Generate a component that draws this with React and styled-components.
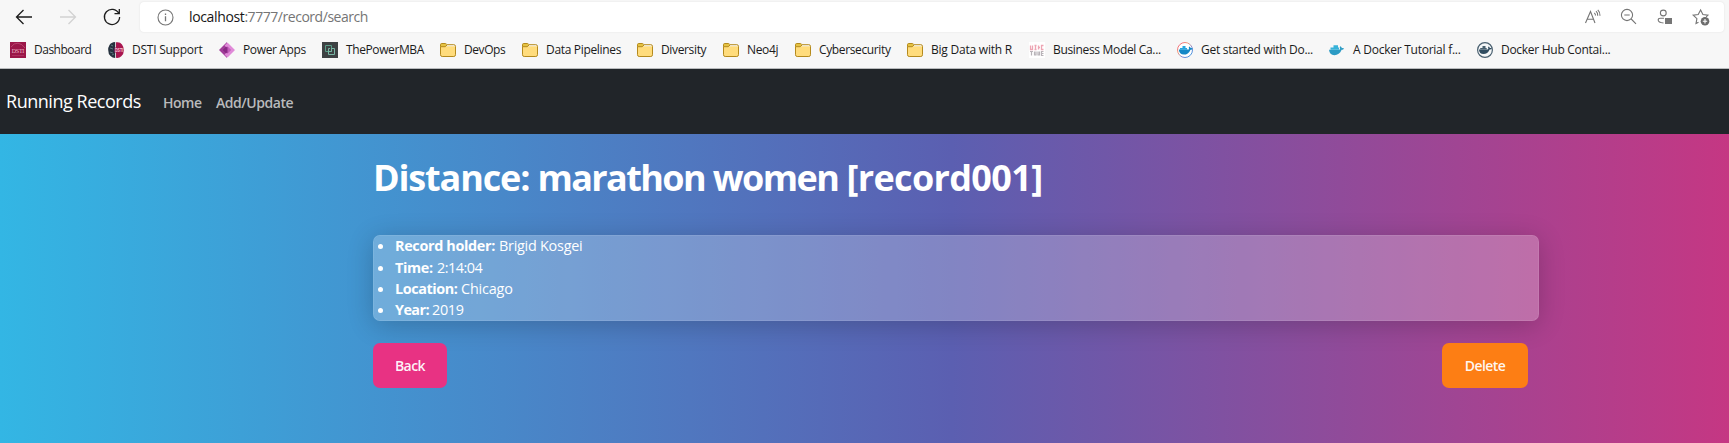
import React from "react";
import styled, { createGlobalStyle } from "styled-components";

const GlobalStyle = createGlobalStyle`
  * { box-sizing: border-box; }
  html, body { margin: 0; height: 100%; }
  body {
    font-family: "Open Sans", "Noto Sans", sans-serif;
    font-size: 14.4px;
    line-height: 1.5;
    color: #fff;
    overflow: hidden;
  }
`;

const Window = styled.div`
  display: flex;
  flex-direction: column;
  height: 100vh;
`;

const Chrome = styled.header`
  flex: none;
  height: 69px;
  padding-top: 2px;
  background: #f7f7f7;
  border-bottom: 1px solid #b9bbbd;
`;

const Toolbar = styled.div`
  display: flex;
  align-items: center;
  height: 30px;
  padding: 0 5px 0 15px;
`;

const NavButtons = styled.div`
  display: flex;
  gap: 26px;
  width: 125px;
`;

const AddressBar = styled.div`
  flex: 1;
  display: flex;
  align-items: center;
  height: 30px;
  padding: 0 14px 0 17px;
  border-radius: 4px;
  background: #fff;
  box-shadow: 0 0 2px rgba(0, 0, 0, 0.1);
`;

const Url = styled.div`
  flex: 1;
  margin-left: 15px;
  font-size: 14px;
  line-height: 20px;
  letter-spacing: -0.46px;
  color: #757575;
`;

const Host = styled.span`
  letter-spacing: -0.36px;
  color: #161616;
`;

const AddressActions = styled.div`
  display: flex;
  gap: 18px;
`;

const Bookmarks = styled.nav`
  display: flex;
  align-items: center;
  height: 36px;
  padding-left: 10px;
  gap: 16px;
`;

const Bookmark = styled.div`
  display: flex;
  align-items: center;
  gap: 8px;
`;

const BookmarkLabel = styled.span`
  width: ${(p) => p.$width}px;
  font-size: 12px;
  line-height: 16px;
  letter-spacing: ${(p) => p.$track}px;
  white-space: nowrap;
  color: #1b1b1b;
`;

const Icon = styled.svg`
  display: block;
  flex: none;
  width: ${(p) => p.$size || 16}px;
  height: ${(p) => p.$size || 16}px;
  overflow: visible;
`;

const Page = styled.div`
  flex: 1;
  background: linear-gradient(to right, #33b6e4 0%, #5b5fb1 55%, #c53783 100%);
`;

const Navbar = styled.nav`
  display: flex;
  align-items: center;
  height: 65px;
  padding-left: 6px;
  background: #212529;
`;

const Brand = styled.a`
  width: 157px;
  font-size: 18px;
  letter-spacing: -0.47px;
  color: #fff;
`;

const NavLink = styled.a`
  width: ${(p) => p.$width}px;
  padding-top: 1px;
  font-weight: 600;
  font-size: 14px;
  letter-spacing: ${(p) => p.$track}px;
  color: #b9babc;
`;

const Container = styled.main`
  width: 1166px;
  margin-left: 373px;
`;

const Title = styled.h1`
  margin: 0;
  padding-top: 21px;
  height: 101px;
  font-size: 36px;
  font-weight: 700;
  line-height: 46px;
  letter-spacing: -1.15px;
  white-space: nowrap;
`;

const Distance = styled.span`
  letter-spacing: -1.6px;
`;

const RecordId = styled.span`
  letter-spacing: -0.65px;
`;

const Card = styled.section`
  height: 86px;
  border: 1px solid rgba(255, 255, 255, 0.3);
  border-radius: 7px;
  background: rgba(255, 255, 255, 0.24);
  background-clip: padding-box;
  box-shadow: 0 4px 27px rgba(0, 0, 0, 0.2);
`;

const Facts = styled.ul`
  margin: -1px 0 0;
  padding: 0;
  list-style: none;
`;

const Fact = styled.li`
  display: flex;
  align-items: center;
  gap: 4px;
  height: 21.4px;
  padding-left: 4px;
  line-height: 21px;
  white-space: nowrap;

  &::before {
    content: "";
    width: 5px;
    height: 5px;
    margin: 2px 8px 0 0;
    border-radius: 50%;
    background: #fff;
  }
`;

const FactName = styled.strong`
  width: ${(p) => p.$width}px;
  font-weight: 700;
  letter-spacing: ${(p) => p.$track}px;
`;

const FactValue = styled.span`
  letter-spacing: ${(p) => p.$track}px;
`;

const Actions = styled.div`
  display: flex;
  justify-content: space-between;
  padding: 22px 11px 0 0;
`;

const Button = styled.button`
  width: ${(p) => p.$width}px;
  height: 45px;
  padding: 0;
  border: 0;
  border-radius: 7px;
  background: ${(p) => p.$color};
  font: 600 14px/21px "Open Sans", "Noto Sans", sans-serif;
  letter-spacing: -0.55px;
  color: rgba(255, 255, 255, 0.94);
`;

const FolderIcon = () => (
  <Icon viewBox="0 0 16 16">
    <path d="M.5 4.2h15v8.6q0 1.7-1.7 1.7H2.2Q.5 14.500.5 12.800z" fill="#ffdc7c" />
    <path d="M.5 4V2.700Q.5 1.500 1.700 1.500H5.500L7.200 3 5.700 4.700H.5z" fill="#e5c343" />
    <path
      d="M.5 4.700V2.700Q.5 1.500 1.700 1.500H5.300Q6 1.500 6.500 2L7.200 2.700H13.800Q15.500 2.700 15.500 4.300V12.700Q15.500 14.500 13.800 14.500H2.200Q.5 14.500.5 12.700ZM.5 4.700H5.200L7.200 2.900"
      fill="none"
      stroke="#b58a1c"
    />
  </Icon>
);

const DashboardIcon = () => (
  <Icon viewBox="0 0 16 16">
    <path d="M0 0h16v16H0z" fill="#9b1748" />
    <path d="M1 5Q4 .8 8 1.200T15 6" fill="none" stroke="#c4567f" strokeWidth=".7" />
    <text x="1.800" y="10.500" textLength="12.500" fontFamily="Liberation Serif" fontSize="6" fill="#efb9cb">DSTI</text>
    <path d="M2 13.500h12" stroke="#bd4874" strokeWidth=".5" />
  </Icon>
);

const SupportIcon = () => (
  <Icon viewBox="0 0 16 16">
    <path d="M7.200 0Q3 .3 1.500 3 0 5.500.2 8q0 4 2.300 6 2 2 4.700 2z" fill="#26323f" />
    <path d="M3 3l2 1M2 6l3 1M2 10l3 1M4 13l2-1" stroke="#5d7880" />
    <path d="M8 .3Q12-.5 14 2.500 16 5 15.800 8.500q0 4-2.500 5.800-2 2-5.300 1.500z" fill="#a9164f" />
    <path d="M6.500 5.500h3v5h-3z" fill="#a9164f" />
    <text x="6.900" y="10.200" textLength="8.200" fontFamily="Liberation Sans" fontWeight="700" fontSize="5.500" lengthAdjust="spacingAndGlyphs" fill="#f4cede">DSTI</text>
  </Icon>
);

const PowerAppsIcon = () => (
  <Icon viewBox="0 0 16 16">
    <path d="M8 0L0 8l8 8z" fill="#a13d99" />
    <path d="M8 4L4 8l4 4z" fill="#7d2378" />
    <path d="M8.500.5L16 8l-7.500 7.500L5.500 12.500 10 8 5.500 3.500z" fill="#e08ad8" />
    <path d="M8 4.500L11.500 8 8 11.500 4.500 8z" fill="#8b2a86" />
    <path d="M8.500 4.500L12 8l-3.500 3.500z" fill="#c35fbc" />
  </Icon>
);

const PowerMbaIcon = () => (
  <Icon viewBox="0 0 16 16">
    <path d="M0 0h16v16H0z" fill="#3e4244" />
    <path d="M3.500 3.500h6v6h-6z" fill="none" stroke="#5b9c88" />
    <path d="M9.500 6.500h3v6h-6v-6h1.500M6.500 9.500h3v-3" fill="none" stroke="#79b7a4" />
  </Icon>
);

const CanvasIcon = () => (
  <Icon viewBox="0 0 16 16">
    <path d="M0 0h16v16H0z" fill="#fff" />
    <path d="M1.500 3.500v4h2v-4M5.500 3.500h2M6.500 3.500v4M5.500 7.500h2M9.500 3.500v4M9.500 5.500h1.500M14.500 3.500h-2v4h2" fill="none" stroke="#eda5b3" strokeWidth="1.300" />
    <path d="M1 9.500h3M2.500 9.500v4M5.500 9.500v3.500h1.500v-3.500M9 9.500v3.500h1.500v-3.500M14.500 9.500h-2v4h2M12.500 11.500h2" fill="none" stroke="#b8b3b8" strokeWidth="1.200" />
  </Icon>
);

const whale = "M0 7h9.200c.5 0 .9-.2 1.200-.7-.6-.8-.5-1.800.2-2.500.9.500 1.200 1.100 1.200 1.700.8-.2 1.600 0 2.200.4-.5.9-1.300 1.200-2.300 1.200C10.300 10.600 8 12 5 12 2 12 .3 10.300 0 7z";

const DockerRingIcon = () => (
  <Icon viewBox="0 0 16 16">
    <defs>
      <linearGradient id="ring" x1="0" y1="0" x2="1" y2="1">
        <stop offset="0" stopColor="#ef4f7c" />
        <stop offset=".35" stopColor="#f29a77" />
        <stop offset=".65" stopColor="#7a87d8" />
        <stop offset="1" stopColor="#2b9ee0" />
      </linearGradient>
    </defs>
    <circle cx="8" cy="8" r="7.500" fill="#fff" stroke="url(#ring)" />
    <path d={whale} transform="translate(1.800 .6)" fill="#1488c6" />
    <path d="M3 6h7v1.800H3zM5.500 4h3v2.200h-3z" fill="#2aa5df" />
  </Icon>
);

const WhaleIcon = () => (
  <Icon viewBox="0 0 16 16">
    <path d={whale} transform="translate(0 .2) scale(1.080)" fill="#2c9bc4" />
    <path d="M1.500 5.500h8.500v2.200h-8.500zM4.500 3.200H9v2.500H4.500z" fill="#37b2d9" />
  </Icon>
);

const DockerHubIcon = () => (
  <Icon viewBox="0 0 16 16">
    <circle cx="8" cy="8" r="7.400" fill="#f5f7f8" stroke="#4a6070" strokeWidth="1.200" />
    <path d={whale} transform="translate(1.900 1) scale(.92)" fill="#314d61" />
    <path d="M3.200 5.900h6.500v1.700H3.200zM5.500 4h3v2h-3z" fill="#48606f" />
  </Icon>
);

const BackIcon = () => (
  <Icon $size={18} viewBox="0 0 18 18" fill="none" stroke="#1d1d1d" strokeWidth="1.300">
    <path d="M17 9H1.500M8.500 2L1.500 9l7 7" />
  </Icon>
);

const ForwardIcon = () => (
  <Icon $size={18} viewBox="0 0 18 18" fill="none" stroke="#d2d2d2" strokeWidth="1.300">
    <path d="M1 9h15.500M9.500 2l7 7-7 7" />
  </Icon>
);

const ReloadIcon = () => (
  <Icon $size={18} viewBox="0 0 18 18" fill="none" stroke="#1d1d1d" strokeWidth="1.300">
    <path d="M15.800 5.500A7.600 7.600 0 1 0 16.600 9M16.300 1v4.700h-4.800" />
  </Icon>
);

const InfoIcon = () => (
  <Icon $size={17} viewBox="0 0 17 17" fill="none" stroke="#757575" strokeWidth="1.100">
    <circle cx="8.500" cy="8.500" r="7.500" />
    <path d="M8.500 7.300v5M8.500 4.500v1.400" strokeWidth="1.300" />
  </Icon>
);

const ReadAloudIcon = () => (
  <Icon $size={18} viewBox="0 0 18 18" fill="none" stroke="#757575" strokeWidth="1.100">
    <path d="M1.500 15L6.500 3.500 11 15M3.200 11.200h6.200M10.300 4.800q1.300 1.200 1.200 2.700M12 3.200q2 1.800 1.700 4.600M13.800 1.800q2.500 2.400 2.200 6" />
  </Icon>
);

const ZoomOutIcon = () => (
  <Icon $size={18} viewBox="0 0 18 18" fill="none" stroke="#757575" strokeWidth="1.100">
    <circle cx="7" cy="7" r="5.600" />
    <path d="M11.200 11l4.800 4.800M4.300 7h5.400" />
  </Icon>
);

const ProfileIcon = () => (
  <Icon $size={18} viewBox="0 0 18 18" fill="none" stroke="#757575" strokeWidth="1.100">
    <circle cx="7.300" cy="5" r="2.900" />
    <path d="M8 10.300H4.300Q2.200 10.300 2.200 12q0 2.500 5.300 3" />
    <path d="M9 10h7v6H9z" fill="#757575" stroke="none" />
  </Icon>
);

const FavoriteIcon = () => (
  <Icon $size={18} viewBox="0 0 18 18" fill="none" stroke="#757575" strokeWidth="1.100">
    <path d="M6.500 14.300l-2.500 1.300.9-5L1.200 7.200l5-.7L8.600 2l2.300 4.500 5 .7-1.700 1.600" />
    <circle cx="13" cy="13.300" r="4.300" fill="#6c6c6c" stroke="none" />
    <path d="M13 11.100v4.400M10.800 13.300h4.400" stroke="#fff" />
  </Icon>
);

const bookmarks = [
  { label: "Dashboard", icon: DashboardIcon, width: 58, track: -0.5 },
  { label: "DSTI Support", icon: SupportIcon, width: 71, track: -0.24 },
  { label: "Power Apps", icon: PowerAppsIcon, width: 63, track: -0.37 },
  { label: "ThePowerMBA", icon: PowerMbaIcon, width: 78, track: -0.4 },
  { label: "DevOps", icon: FolderIcon, width: 42, track: -0.42 },
  { label: "Data Pipelines", icon: FolderIcon, width: 75, track: -0.33 },
  { label: "Diversity", icon: FolderIcon, width: 46, track: -0.35 },
  { label: "Neo4j", icon: FolderIcon, width: 32, track: -0.35 },
  { label: "Cybersecurity", icon: FolderIcon, width: 72, track: -0.37 },
  { label: "Big Data with R", icon: FolderIcon, width: 82, track: -0.22 },
  { label: "Business Model Ca...", icon: CanvasIcon, width: 108, track: -0.33 },
  { label: "Get started with Do...", icon: DockerRingIcon, width: 112, track: -0.29 },
  { label: "A Docker Tutorial f...", icon: WhaleIcon, width: 108, track: -0.25 },
  { label: "Docker Hub Contai...", icon: DockerHubIcon, width: 110, track: -0.28 },
];

const facts = [
  { name: "Record holder:", width: 100, nameTrack: -0.34, value: "Brigid Kosgei", track: -0.25 },
  { name: "Time:", width: 38, nameTrack: -0.35, value: "2:14:04", track: -0.48 },
  { name: "Location:", width: 62, nameTrack: -0.42, value: "Chicago", track: -0.18 },
  { name: "Year:", width: 33, nameTrack: -0.56, value: "2019", track: -0.35 },
];

export default function App() {
  return (
    <Window>
      <GlobalStyle />
      <Chrome>
        <Toolbar>
          <NavButtons>
            <BackIcon />
            <ForwardIcon />
            <ReloadIcon />
          </NavButtons>
          <AddressBar>
            <InfoIcon />
            <Url>
              <Host>localhost</Host>:7777/record/search
            </Url>
            <AddressActions>
              <ReadAloudIcon />
              <ZoomOutIcon />
              <ProfileIcon />
              <FavoriteIcon />
            </AddressActions>
          </AddressBar>
        </Toolbar>
        <Bookmarks>
          {bookmarks.map(({ label, icon: BookmarkIcon, width, track }) => (
            <Bookmark key={label}>
              <BookmarkIcon />
              <BookmarkLabel $width={width} $track={track}>{label}</BookmarkLabel>
            </Bookmark>
          ))}
        </Bookmarks>
      </Chrome>
      <Page>
        <Navbar>
          <Brand>Running Records</Brand>
          <NavLink $width={53} $track={-0.5}>Home</NavLink>
          <NavLink $width={90} $track={-0.45}>Add/Update</NavLink>
        </Navbar>
        <Container>
          <Title>
            Distance: <Distance>marathon women</Distance> <RecordId>[record001]</RecordId>
          </Title>
          <Card>
            <Facts>
              {facts.map((fact) => (
                <Fact key={fact.name}>
                  <FactName $width={fact.width} $track={fact.nameTrack}>{fact.name}</FactName>
                  <FactValue $track={fact.track}>{fact.value}</FactValue>
                </Fact>
              ))}
            </Facts>
          </Card>
          <Actions>
            <Button $width={74} $color="#e83283">Back</Button>
            <Button $width={86} $color="#fd7e14">Delete</Button>
          </Actions>
        </Container>
      </Page>
    </Window>
  );
}
